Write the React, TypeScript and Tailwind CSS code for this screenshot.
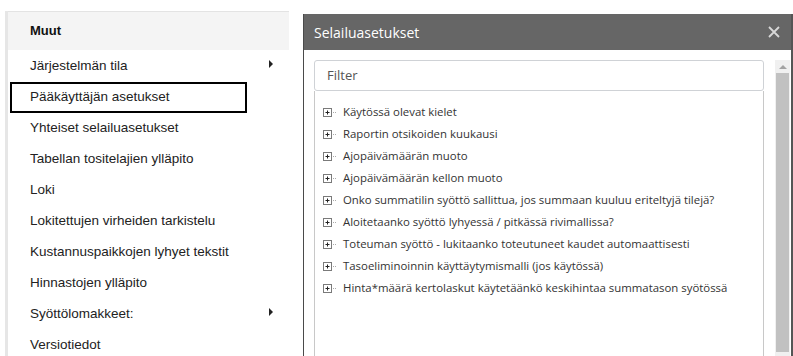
import React from 'react';

const menuItems = [
  { label: 'Järjestelmän tila', sub: true },
  { label: 'Pääkäyttäjän asetukset', active: true },
  { label: 'Yhteiset selailuasetukset' },
  { label: 'Tabellan tositelajien ylläpito' },
  { label: 'Loki' },
  { label: 'Lokitettujen virheiden tarkistelu' },
  { label: 'Kustannuspaikkojen lyhyet tekstit' },
  { label: 'Hinnastojen ylläpito' },
  { label: 'Syöttölomakkeet:', sub: true },
  { label: 'Versiotiedot' },
];

const settings = [
  'Käytössä olevat kielet',
  'Raportin otsikoiden kuukausi',
  'Ajopäivämäärän muoto',
  'Ajopäivämäärän kellon muoto',
  'Onko summatilin syöttö sallittua, jos summaan kuuluu eriteltyjä tilejä?',
  'Aloitetaanko syöttö lyhyessä / pitkässä rivimallissa?',
  'Toteuman syöttö - lukitaanko toteutuneet kaudet automaattisesti',
  'Tasoeliminoinnin käyttäytymismalli (jos käytössä)',
  'Hinta*määrä kertolaskut käytetäänkö keskihintaa summatason syötössä',
];

const PlusBox = () => (
  <svg width="14" height="9" viewBox="0 0 14 9" className="shrink-0">
    <rect x="0.5" y="0.5" width="8" height="8" fill="#fff" stroke="#7a7a7a" />
    <path d="M2.5 4.5h4M4.5 2.5v4" stroke="#222" strokeWidth="1" />
    <path d="M10 4.5h1M12 4.5h1" stroke="#aaa" strokeWidth="1" />
  </svg>
);

const App = () => {
  return (
    <div className="w-[793px] h-[356px] overflow-hidden bg-white flex font-['Liberation_Sans',Arial,sans-serif]">
      <div className="w-[303px] shrink-0 pt-[11px] pl-[5px]">
        <div className="flex h-[345px]">
          <div className="w-[3px] bg-[#e6e6e6]" />
          <div className="w-[281px] border-t border-[#e3e3e3]">
            <div className="h-[38px] bg-[#f4f4f4] flex items-center pl-[22px] text-[13px] font-bold text-[#111]">Muut</div>
            <div className="pt-[1px]">
              {menuItems.map(item => (
                <div
                  key={item.label}
                  className={`h-[31px] flex items-center text-[13.5px] text-[#222] ${item.active ? 'ml-[2px] w-[237px] border-2 border-black pl-[18px]' : 'pl-[22px] pr-[16px]'}`}
                >
                  <span className="flex-1">{item.label}</span>
                  {item.sub && (
                    <svg width="4" height="8" viewBox="0 0 4 8" className="mb-[6px]">
                      <path d="M0 0L4 4L0 8Z" fill="#222" />
                    </svg>
                  )}
                </div>
              ))}
            </div>
          </div>
        </div>
      </div>

      <div className="flex-1 mt-[14px] flex flex-col border-l border-[#4a4a4a] border-r-2 border-r-[#555]">
        <div className="h-[36px] bg-[#666666] flex items-center justify-between pl-[10px] pr-[11px]">
          <span className="text-white text-[14px] font-['Open_Sans',sans-serif]">Selailuasetukset</span>
          <svg width="12" height="12" viewBox="0 0 12 12">
            <path d="M1 1L11 11M11 1L1 11" stroke="#d8d8d8" strokeWidth="1.8" />
          </svg>
        </div>
        <div className="flex-1 bg-white flex pl-[10px] pt-[10px]">
          <div className="w-[450px] flex flex-col">
            <div className="h-[31px] border border-[#cfd2d6] rounded-[3px] flex items-center pl-[12px] text-[13px] text-[#555] font-['Open_Sans',sans-serif]">
              Filter
            </div>
            <div className="flex-1 border-l border-r border-[#c8c8c8] pt-[10px] pl-[8px]">
              {settings.map(s => (
                <div key={s} className="h-[22px] flex items-center gap-[6px] text-[11.4px] text-[#333] font-['Open_Sans',sans-serif]">
                  <PlusBox />
                  <span>{s}</span>
                </div>
              ))}
            </div>
          </div>
          <div className="ml-[11px] w-[15px] bg-[#f0f0f0] flex flex-col items-center">
            <svg width="10" height="8" viewBox="0 0 10 8" className="mt-[3px] mb-[2px]">
              <path d="M1 6L5 2L9 6Z" fill="#a3a3a3" />
            </svg>
            <div className="w-[13px] flex-1 bg-[#c1c1c1] mb-[4px]" />
          </div>
        </div>
      </div>
    </div>
  );
};

export default App;
